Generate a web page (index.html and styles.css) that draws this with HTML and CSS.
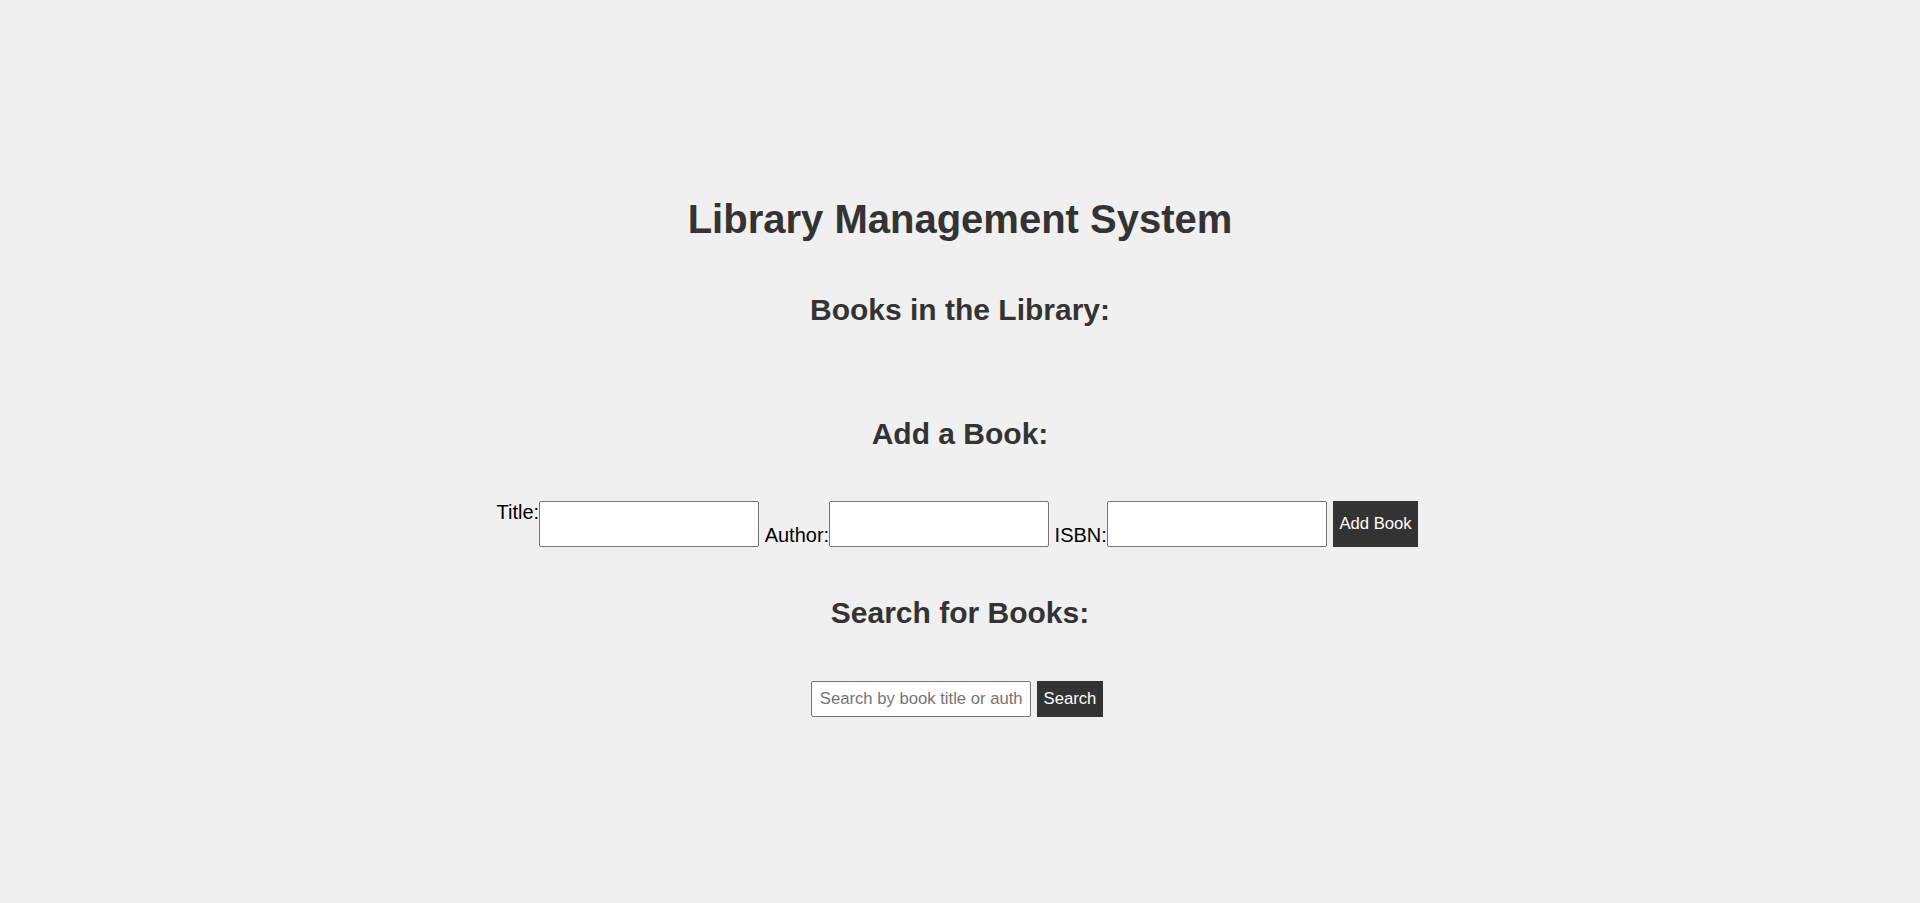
FILE: index.html
```html
<!DOCTYPE html>
<html lang="en">
<head>
<meta charset="utf-8">
<title>Library Management System</title>
<link rel="stylesheet" href="styles.css">
</head>
<body>
<main class="page">
  <h1 class="page-title">Library Management System</h1>
  <h2 class="section-title section-title--books">Books in the Library:</h2>
  <ul class="book-list"></ul>
  <h2 class="section-title">Add a Book:</h2>
  <form class="add-form">
    <label class="field-label field-label--top" for="title">Title:</label>
    <input class="text-input text-input--large" type="text" id="title">
    <label class="field-label field-label--bottom" for="author">Author:</label>
    <input class="text-input text-input--large" type="text" id="author">
    <label class="field-label field-label--bottom" for="isbn">ISBN:</label>
    <input class="text-input text-input--large" type="text" id="isbn">
    <button class="btn btn--large" type="button">Add Book</button>
  </form>
  <h2 class="section-title section-title--search">Search for Books:</h2>
  <div class="search-row">
    <input class="text-input text-input--search" type="text" placeholder="Search by book title or author">
    <button class="btn btn--search" type="button">Search</button>
  </div>
</main>
</body>
</html>
```
FILE: styles.css
```css
html, body {
  margin: 0;
  padding: 0;
}

body {
  background: #f0f0f0;
  font-family: "Liberation Sans", Arial, sans-serif;
  color: #333;
}

.page {
  display: flex;
  flex-direction: column;
  align-items: center;
  padding-top: 169.7px;
}

.page-title {
  font-size: 40px;
  line-height: 46px;
  font-weight: bold;
  color: #333;
  margin: 26.8px 0 26px;
}

.section-title {
  font-size: 30px;
  line-height: 34.5px;
  font-weight: bold;
  color: #333;
  margin: 24.9px 0;
}

.book-list {
  list-style: none;
  margin: 19.5px 0;
  padding: 0;
}

.add-form {
  display: flex;
  align-items: flex-start;
  margin: 25px 0 24.5px;
}

.field-label {
  font-size: 20px;
  line-height: 23px;
  color: #000;
}

.field-label--bottom {
  align-self: flex-end;
  margin-left: 5.5px;
}

.text-input {
  box-sizing: border-box;
  width: 220px;
  margin: 0;
  background: #fff;
  border: 1px solid #767676;
  border-radius: 2px;
  font-family: "Liberation Sans", Arial, sans-serif;
  color: #000;
}

.text-input--large {
  height: 46px;
  padding: 0 10px;
  font-size: 20px;
}

.text-input--search {
  height: 36px;
  padding: 0 7.5px;
  font-size: 16.67px;
}

.text-input--search::placeholder {
  color: #757575;
}

.btn {
  box-sizing: border-box;
  background: #333;
  color: #fff;
  border: 0;
  border-radius: 0;
  font-family: "Liberation Sans", Arial, sans-serif;
  font-size: 16.67px;
  padding: 0 6.3px;
  cursor: pointer;
}

.btn--large {
  height: 46px;
  margin: 0 5.5px 0 6.3px;
}

.search-row {
  display: flex;
  margin: 25px 0;
}

.btn--search {
  height: 36px;
  margin: 0 6px 0 6px;
}
```
